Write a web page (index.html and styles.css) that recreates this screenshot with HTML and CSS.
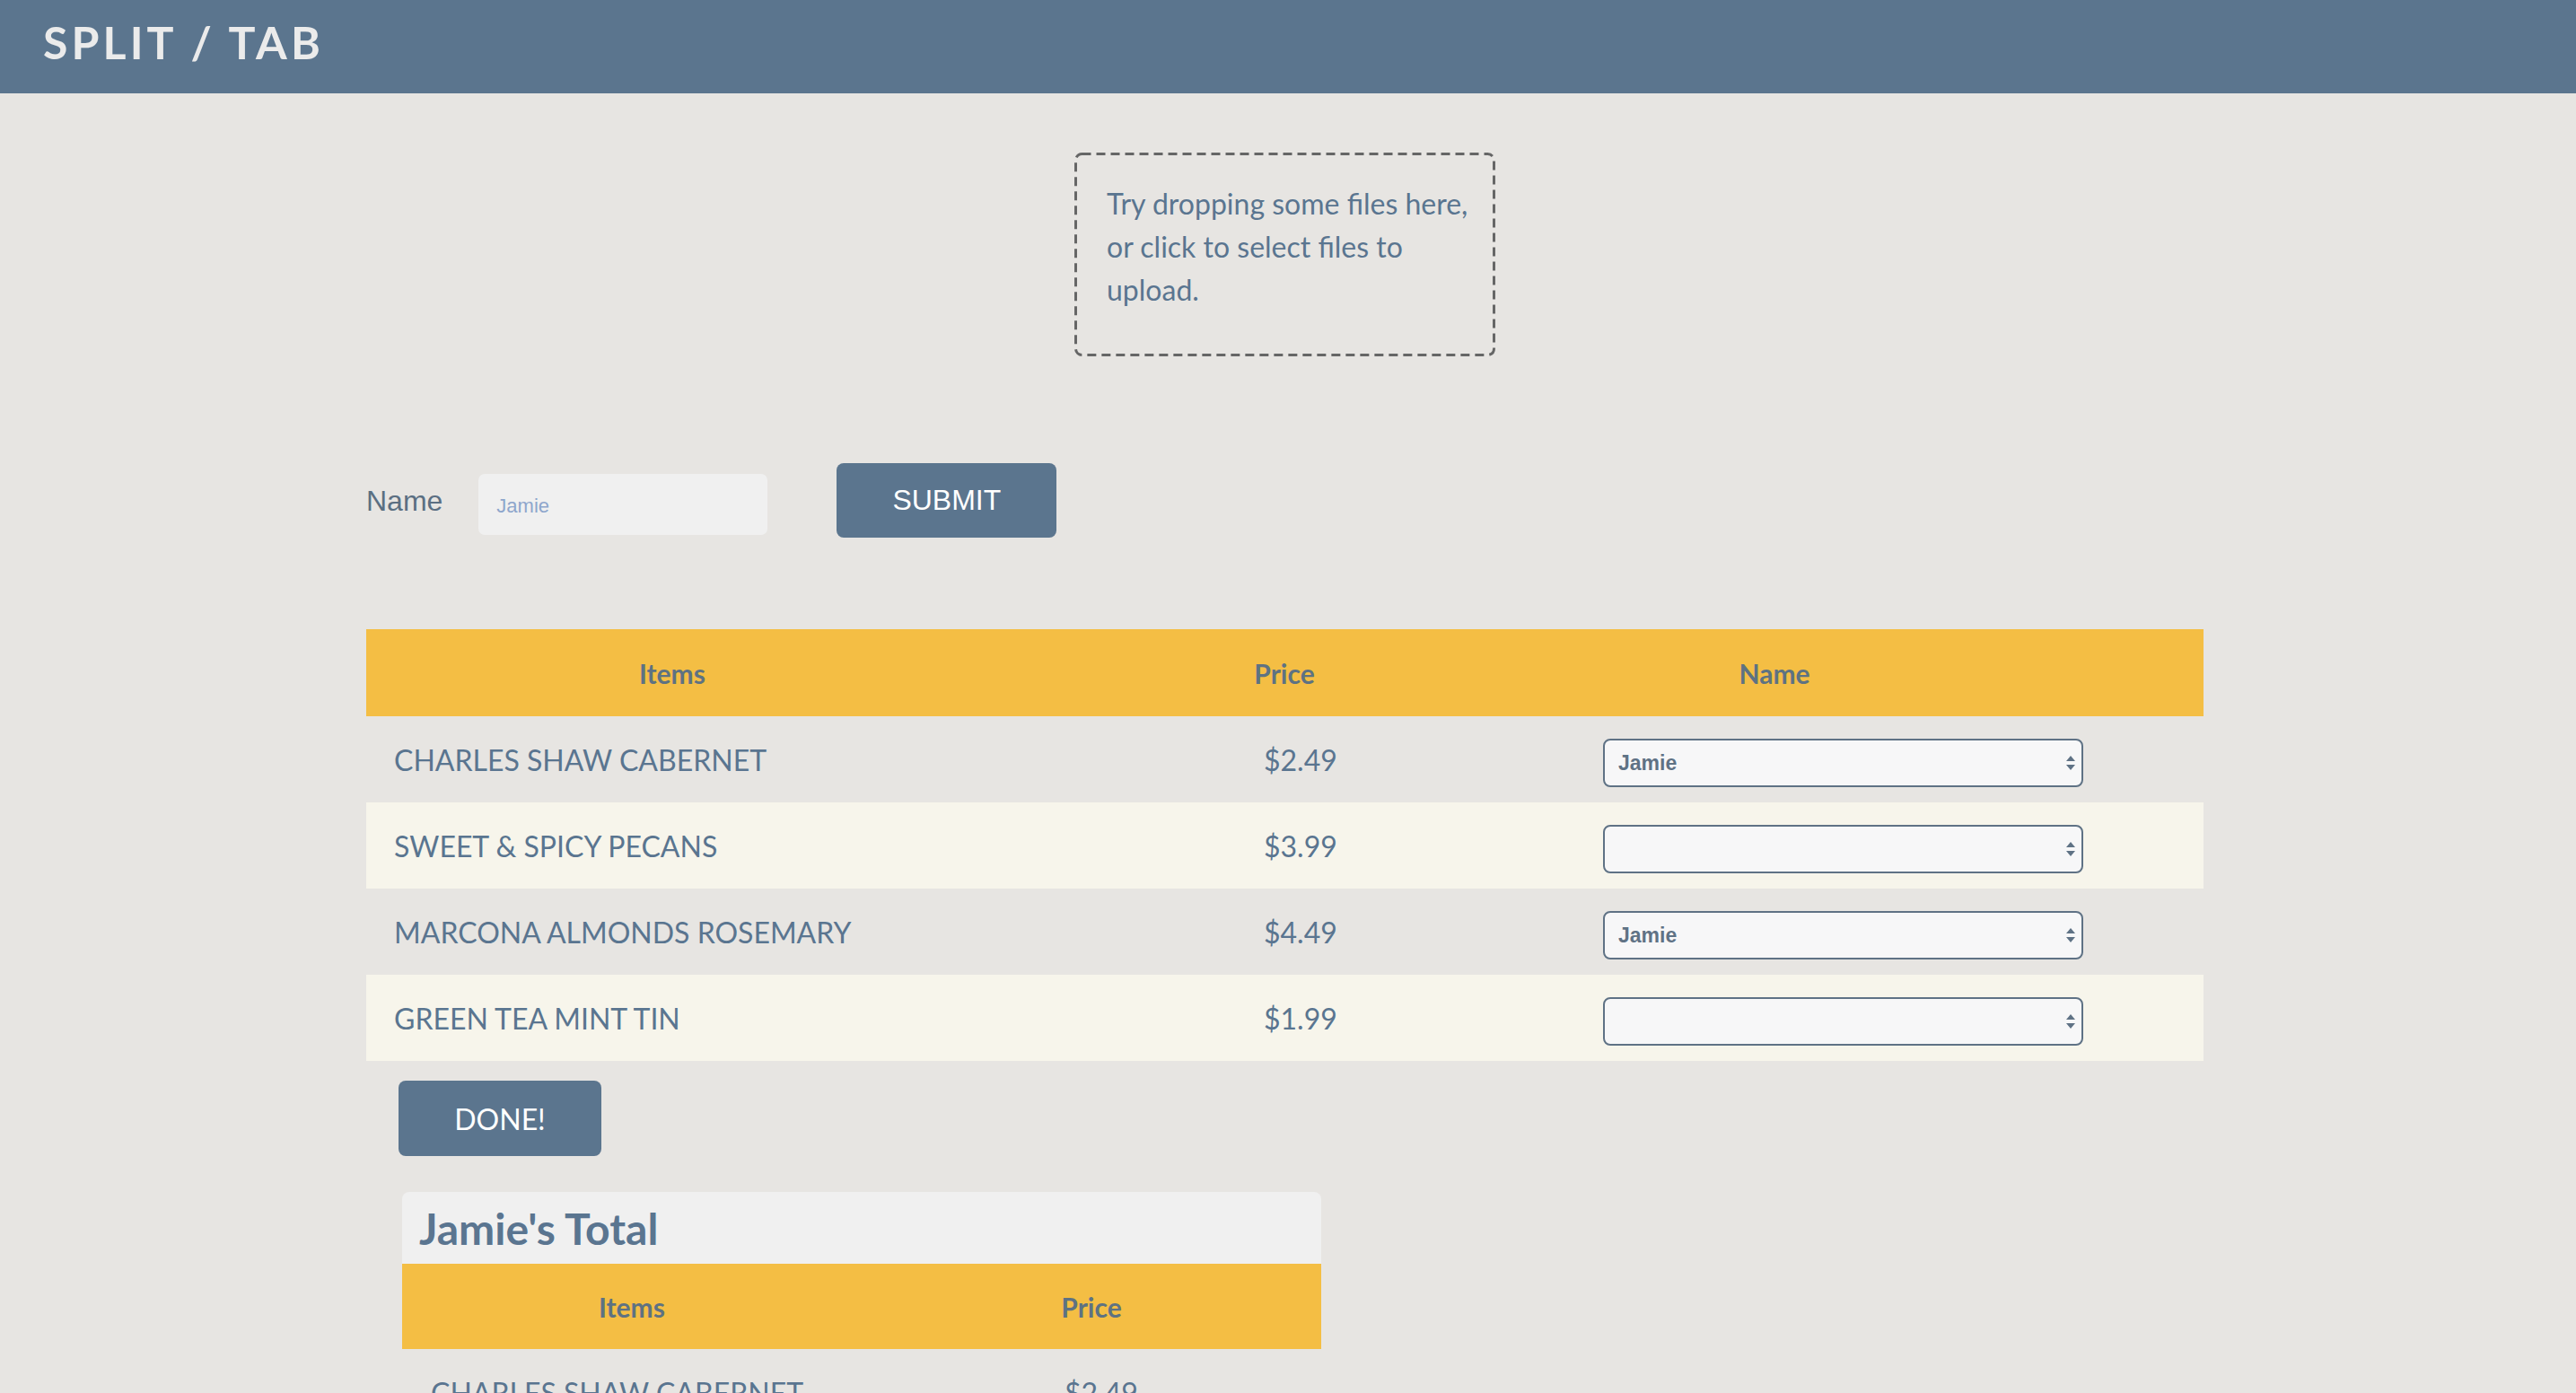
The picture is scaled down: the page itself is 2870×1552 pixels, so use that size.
FILE: index.html
```html
<!DOCTYPE html>
<html lang="en">
<head>
<meta charset="utf-8">
<title>Split / Tab</title>
<link rel="stylesheet" href="styles.css">
</head>
<body>
<header class="topbar">
  <h1 class="brand">SPLIT / TAB</h1>
</header>
<main class="page">
  <div class="dropzone">
    <svg class="dropzone-border" width="469" height="227" viewBox="0 0 469 227"><rect x="1.5" y="1.5" width="466" height="224" rx="7" ry="7" fill="none" stroke="#666666" stroke-width="3" stroke-dasharray="10 6"/></svg>
    <p>Try dropping some files here, or click to select files to upload.</p>
  </div>
  <div class="container">
    <form class="name-form">
      <label class="name-label" for="name">Name</label>
      <input class="name-input" id="name" type="text" placeholder="Jamie">
      <button class="btn btn-submit" type="button">SUBMIT</button>
    </form>

    <div class="items-table">
      <div class="thead">
        <div class="th">Items</div>
        <div class="th">Price</div>
        <div class="th">Name</div>
        <div class="th"></div>
      </div>
      <div class="trow">
        <div class="td">CHARLES SHAW CABERNET</div>
        <div class="td">$2.49</div>
        <div class="select-wrap">
          <select class="name-select"><option>Jamie</option><option></option></select>
          <svg class="select-arrows" width="10" height="16" viewBox="0 0 10 16"><path d="M5 0 L10 6 L0 6 Z M0 10 L10 10 L5 16 Z" fill="#5f7285"/></svg>
        </div>
        <div></div>
      </div>
      <div class="trow alt">
        <div class="td">SWEET &amp; SPICY PECANS</div>
        <div class="td">$3.99</div>
        <div class="select-wrap">
          <select class="name-select"><option></option><option>Jamie</option></select>
          <svg class="select-arrows" width="10" height="16" viewBox="0 0 10 16"><path d="M5 0 L10 6 L0 6 Z M0 10 L10 10 L5 16 Z" fill="#5f7285"/></svg>
        </div>
        <div></div>
      </div>
      <div class="trow">
        <div class="td">MARCONA ALMONDS ROSEMARY</div>
        <div class="td">$4.49</div>
        <div class="select-wrap">
          <select class="name-select"><option>Jamie</option><option></option></select>
          <svg class="select-arrows" width="10" height="16" viewBox="0 0 10 16"><path d="M5 0 L10 6 L0 6 Z M0 10 L10 10 L5 16 Z" fill="#5f7285"/></svg>
        </div>
        <div></div>
      </div>
      <div class="trow alt">
        <div class="td">GREEN TEA MINT TIN</div>
        <div class="td">$1.99</div>
        <div class="select-wrap">
          <select class="name-select"><option></option><option>Jamie</option></select>
          <svg class="select-arrows" width="10" height="16" viewBox="0 0 10 16"><path d="M5 0 L10 6 L0 6 Z M0 10 L10 10 L5 16 Z" fill="#5f7285"/></svg>
        </div>
        <div></div>
      </div>
    </div>

    <button class="btn btn-done" type="button">DONE!</button>

    <section class="total-card">
      <h2 class="total-title">Jamie's Total</h2>
      <div class="thead2">
        <div class="th">Items</div>
        <div class="th">Price</div>
      </div>
      <div class="trow2">
        <div class="td">CHARLES SHAW CABERNET</div>
        <div class="td">$2.49</div>
      </div>
      <div class="trow2 alt">
        <div class="td">MARCONA ALMONDS ROSEMARY</div>
        <div class="td">$4.49</div>
      </div>
    </section>
  </div>
</main>
</body>
</html>
```

FILE: styles.css
```css
* { box-sizing: border-box; }

html, body {
  margin: 0;
  padding: 0;
  background: #e7e5e2;
  font-family: "Lato", "Liberation Sans", sans-serif;
  color: #5a7590;
}

.topbar {
  height: 104px;
  background: #5b758e;
  padding-left: 48px;
}

.brand {
  margin: 0;
  font-family: "Lato", sans-serif;
  font-weight: 700;
  font-size: 50px;
  line-height: 95px;
  letter-spacing: 4.1px;
  color: #ebebeb;
}

.page {
  padding-bottom: 40px;
}

.dropzone {
  position: relative;
  width: 469px;
  height: 227px;
  margin: 66px 0 0 calc(50% - 238px);
  padding: 33px 20px 0 36px;
}

.dropzone-border {
  position: absolute;
  left: 0;
  top: 0;
  pointer-events: none;
}

.dropzone p {
  margin: 0;
  font-size: 32px;
  line-height: 48px;
  color: #5a7590;
}

.container {
  margin-left: 408px;
  width: 2047px;
}

.name-form {
  display: flex;
  align-items: center;
  margin-top: 119px;
}

.name-label {
  font-family: "Liberation Sans", Arial, sans-serif;
  font-size: 32px;
  color: #5b6f82;
  margin-right: 40px;
  padding-top: 2px;
}

.name-input {
  width: 322px;
  height: 68px;
  margin-top: 8px;
  border: none;
  border-radius: 7px;
  background: #f0f0f0;
  padding: 4px 20px 0;
  font-family: "Liberation Sans", Arial, sans-serif;
  font-size: 22px;
  color: #5a7590;
  outline: none;
}

.name-input::placeholder {
  color: #8ea6cc;
}

.btn {
  border: none;
  border-radius: 8px;
  background: #5b758e;
  color: #ffffff;
  cursor: pointer;
  padding: 0;
}

.btn-submit {
  width: 245px;
  height: 83px;
  margin-left: 77px;
  font-family: "Liberation Sans", Arial, sans-serif;
  font-size: 32px;
}

.items-table {
  margin-top: 102px;
}

.thead {
  display: grid;
  grid-template-columns: 682px 682px 410px 1fr;
  align-items: center;
  height: 97px;
  background: #f4be44;
}

.th {
  text-align: center;
  font-family: "Lato", sans-serif;
  font-weight: 700;
  font-size: 30px;
  color: #5e7282;
}

.trow {
  display: grid;
  grid-template-columns: 969px 378px 535px 1fr;
  align-items: center;
  height: 96px;
  padding-left: 31px;
}

.trow.alt, .trow2.alt {
  background: #f7f5eb;
}

.td {
  font-size: 32px;
  color: #5a7590;
  white-space: nowrap;
}

.select-wrap {
  position: relative;
  height: 54px;
  margin-top: 8px;
}

.name-select {
  appearance: none;
  -webkit-appearance: none;
  width: 100%;
  height: 54px;
  border: 2px solid #5f7285;
  border-radius: 8px;
  background: #f7f7f8;
  padding: 0 40px 0 15px;
  font-family: "Liberation Sans", Arial, sans-serif;
  font-weight: 700;
  font-size: 23px;
  color: #5f7285;
  outline: none;
}

.select-arrows {
  position: absolute;
  right: 9px;
  top: 19px;
  pointer-events: none;
}

.btn-done {
  display: block;
  width: 226px;
  height: 84px;
  margin: 22px 0 0 36px;
  font-family: "Lato", sans-serif;
  font-size: 32px;
}

.total-card {
  width: 1024px;
  margin: 40px 0 0 40px;
}

.total-title {
  margin: 0;
  height: 80px;
  padding: 12px 19px 0;
  background: #f0f0f0;
  border-radius: 8px 8px 0 0;
  font-family: "Lato", sans-serif;
  font-weight: 700;
  font-size: 48px;
  line-height: 1.2;
  color: #5a7590;
}

.thead2 {
  display: grid;
  grid-template-columns: 1fr 1fr;
  align-items: center;
  height: 95px;
  background: #f4be44;
}

.trow2 {
  display: grid;
  grid-template-columns: 706px 1fr;
  align-items: center;
  height: 96px;
  padding-left: 32px;
}
```
